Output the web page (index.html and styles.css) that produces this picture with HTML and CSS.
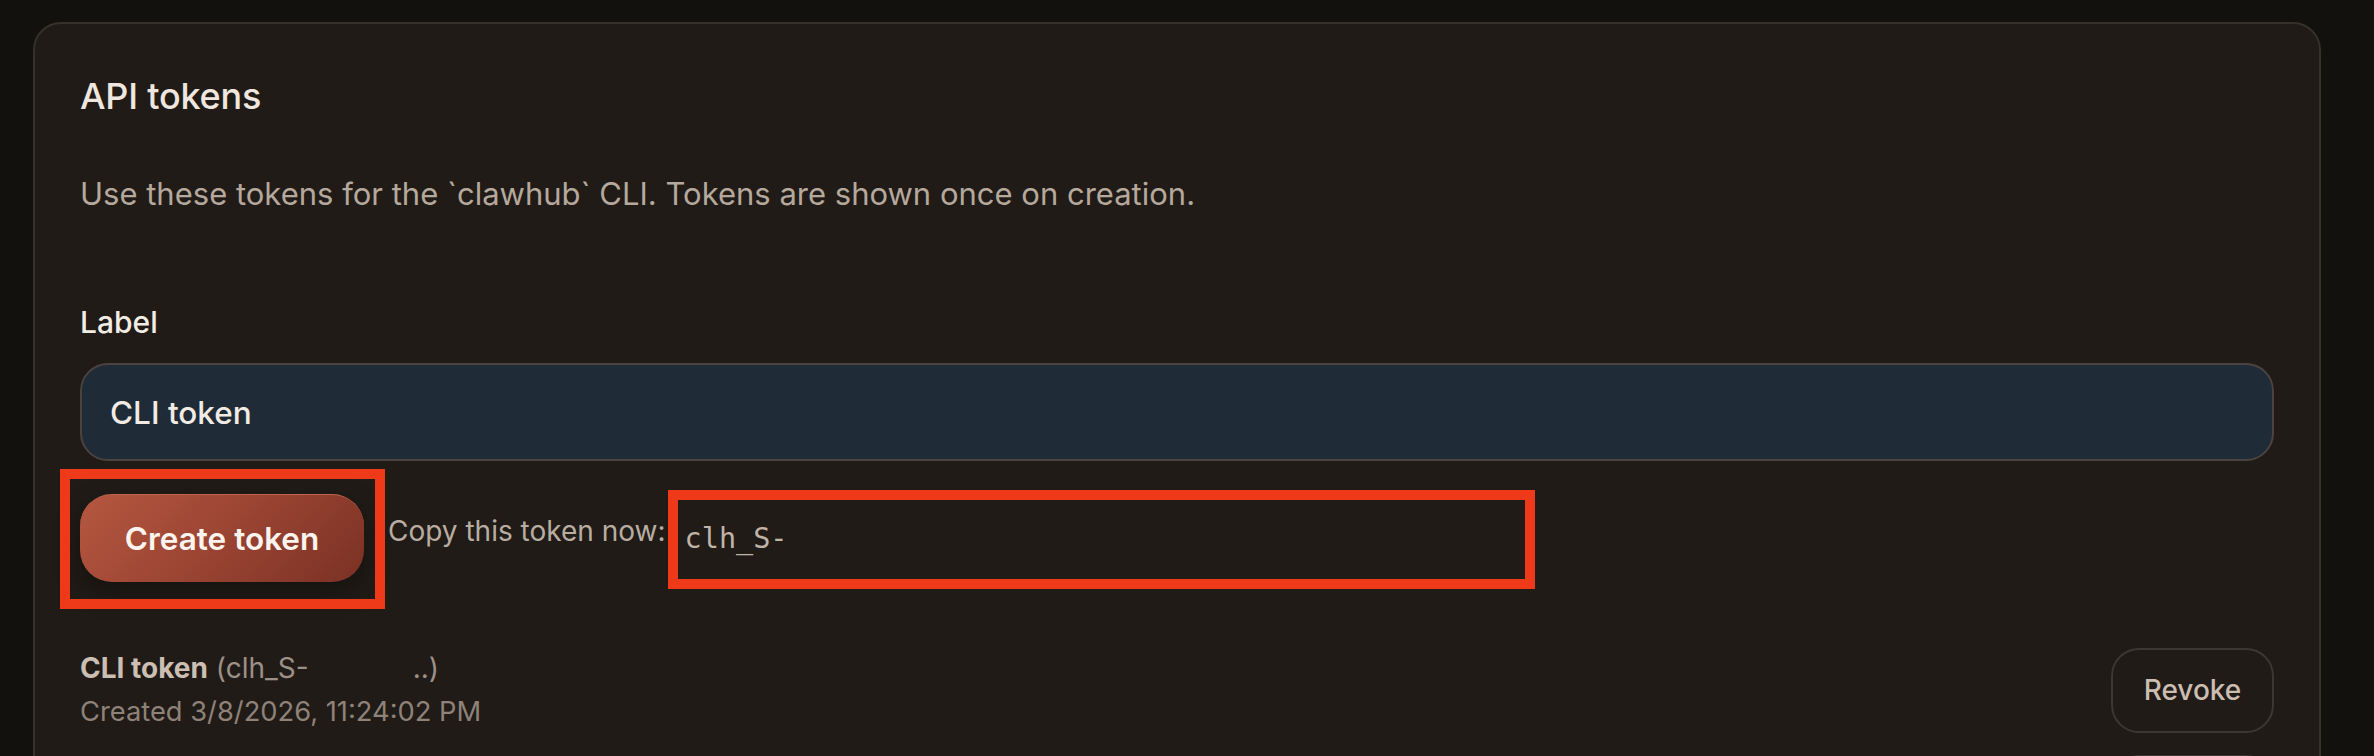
FILE: index.html
```html
<!DOCTYPE html>
<html lang="en">
<head>
<meta charset="utf-8">
<title>API tokens</title>
<link rel="stylesheet" href="styles.css">
</head>
<body>
<div class="page">
  <section class="card">
    <h2 class="card-title">API tokens</h2>
    <p class="card-desc">Use these tokens for the `clawhub` CLI. Tokens are shown once on creation.</p>
    <label class="field-label" for="label-input">Label</label>
    <div class="text-input" id="label-input">CLI token</div>
    <div class="actions">
      <button class="btn-primary" type="button">Create token</button>
      <span class="copy-label">Copy this token now:</span>
      <code class="token-value">clh_S-</code>
    </div>
    <ul class="token-list">
      <li class="token-row">
        <div class="token-info">
          <div class="token-name"><strong>CLI token</strong> <span class="token-prefix">(clh_S-<span class="redacted"></span>..)</span></div>
          <div class="token-date">Created 3/8/2026, 11:24:02 PM</div>
        </div>
        <button class="btn-ghost" type="button">Revoke</button>
      </li>
      <li class="token-row">
        <div class="token-info">
          <div class="token-name"><strong>CLI token</strong> <span class="token-prefix">(clh_S-<span class="redacted"></span>..)</span></div>
          <div class="token-date">Created 3/8/2026, 11:20:41 PM</div>
        </div>
        <button class="btn-ghost" type="button">Revoke</button>
      </li>
    </ul>
  </section>
  <div class="annot annot-button"></div>
  <div class="annot annot-token"></div>
</div>
</body>
</html>
```

FILE: styles.css
```css
html, body {
  margin: 0;
  padding: 0;
  background: #12110e;
  height: 100%;
  overflow: hidden;
}

body {
  font-family: Inter, "Noto Sans", "Liberation Sans", sans-serif;
  color: #efe7df;
}

.page {
  position: relative;
  padding: 22px 0 0 33px;
}

.card {
  box-sizing: border-box;
  width: 2288px;
  min-height: 900px;
  background: #201b17;
  border: 2px solid #37312c;
  border-radius: 28px;
  padding: 50px 45px 0 45px;
}

.card-title {
  margin: 0;
  font-size: 36px;
  line-height: 44px;
  font-weight: 500;
  color: #efe7df;
  letter-spacing: -0.2px;
}

.card-desc {
  margin: 56px 0 0 0;
  font-size: 31px;
  line-height: 40px;
  font-weight: 400;
  color: #b5a89c;
}

.field-label {
  display: block;
  margin-top: 88px;
  font-size: 30px;
  line-height: 40px;
  font-weight: 500;
  color: #f3ece5;
}

.text-input {
  box-sizing: border-box;
  margin-top: 21px;
  height: 98px;
  display: flex;
  align-items: center;
  padding: 0 28px;
  background: #1f2b36;
  border: 2px solid #4a433f;
  border-radius: 28px;
  font-size: 31.5px;
  font-weight: 500;
  color: #f2ebe4;
}

.actions {
  display: flex;
  align-items: flex-start;
  margin-top: 33px;
}

.btn-primary {
  box-sizing: border-box;
  height: 88px;
  width: 284px;
  border: 0;
  border-top: 1px solid #c0644d;
  border-radius: 32px;
  background: linear-gradient(135deg, #b6573f 0%, #9a4433 50%, #7b3124 100%);
  box-shadow: 0 10px 26px rgba(0, 0, 0, 0.35);
  color: #fbf4ee;
  font-family: inherit;
  font-size: 31.5px;
  font-weight: 600;
  padding: 0;
}

.copy-label {
  margin: 19px 0 0 24px;
  font-size: 28px;
  line-height: 36px;
  color: #b9ada2;
}

.token-value {
  margin: 27px 0 0 19px;
  font-family: "DejaVu Sans Mono", "Liberation Mono", monospace;
  font-size: 28.5px;
  line-height: 36px;
  color: #c0b4a9;
}

.token-list {
  list-style: none;
  margin: 65px 0 0 0;
  padding: 0;
  display: flex;
  flex-direction: column;
  gap: 21px;
}

.token-row {
  display: flex;
  align-items: center;
  justify-content: space-between;
}

.token-info {
  font-size: 28px;
  line-height: 43px;
}

.token-name strong {
  font-weight: 700;
  color: #cbbfb3;
}

.token-prefix {
  color: #9c9087;
}

.redacted {
  display: inline-block;
  width: 104px;
}

.token-date {
  font-size: 27.3px;
  color: #8e8279;
}

.btn-ghost {
  box-sizing: border-box;
  width: 163px;
  height: 85px;
  background: transparent;
  border: 2px solid #3d3732;
  border-radius: 28px;
  color: #cbbdb1;
  font-family: inherit;
  font-size: 28px;
  font-weight: 500;
  padding: 0;
}

.annot {
  position: absolute;
  box-sizing: border-box;
  border: 10px solid #ee3a18;
}

.annot-button {
  left: 60px;
  top: 469px;
  width: 325px;
  height: 140px;
}

.annot-token {
  left: 668px;
  top: 490px;
  width: 867px;
  height: 99px;
}
```
